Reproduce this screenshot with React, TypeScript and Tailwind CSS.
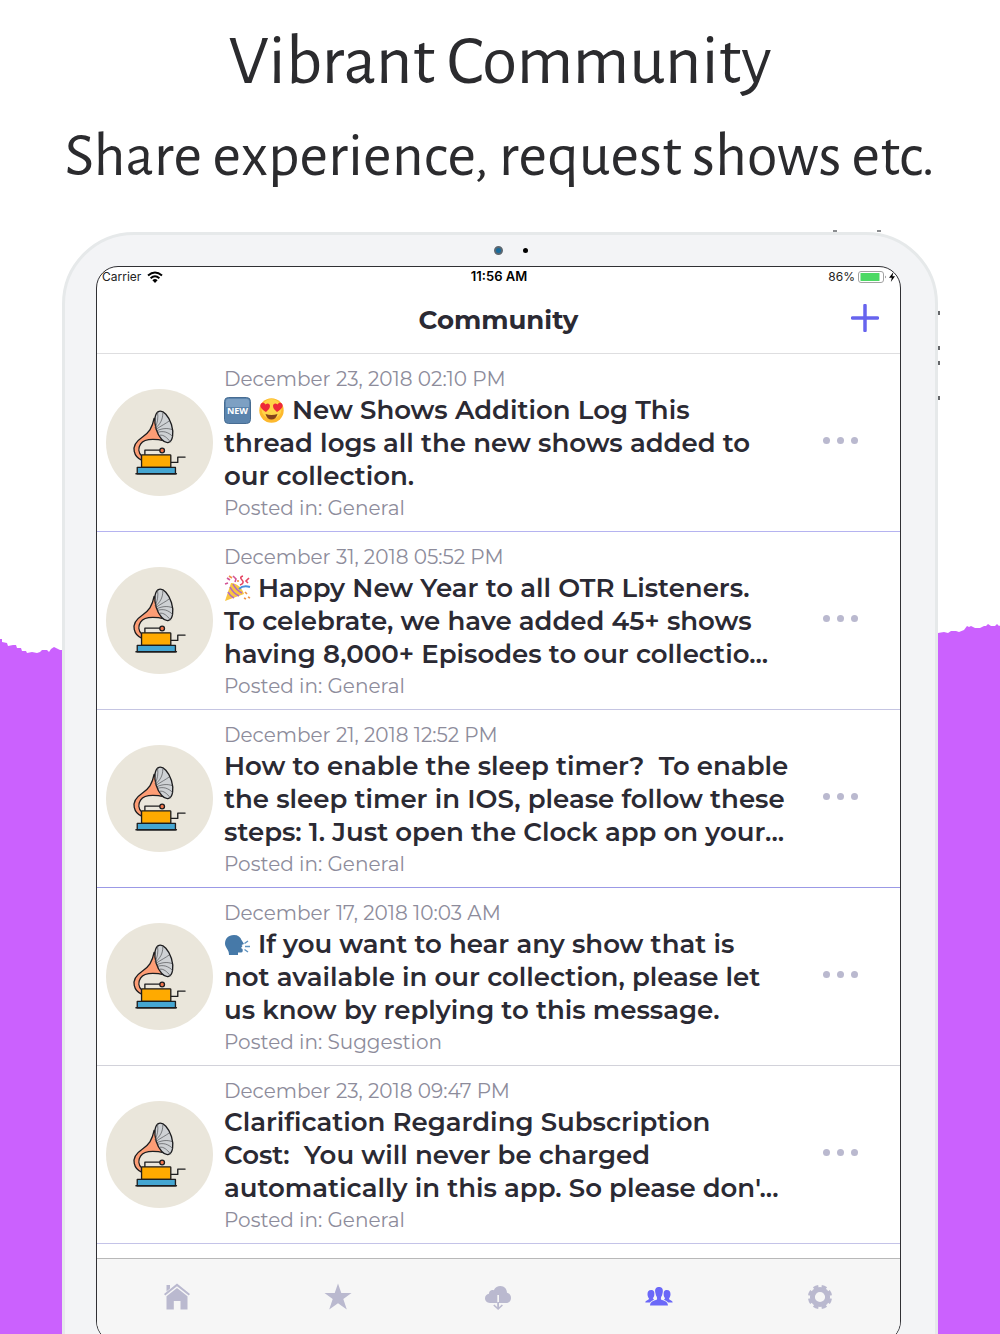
import type { ReactNode } from 'react';

type Emoji = 'new' | 'heartEyes' | 'party' | 'speaking';

interface Post {
  date: string;
  emojis: Emoji[];
  lines: string[];
  category: string;
  divider: string;
}

const posts: Post[] = [
  {
    date: 'December 23, 2018 02:10 PM',
    emojis: ['new', 'heartEyes'],
    lines: ['New Shows Addition Log This', 'thread logs all the new shows added to', 'our collection.'],
    category: 'General',
    divider: 'border-[#b5b3f0]',
  },
  {
    date: 'December 31, 2018 05:52 PM',
    emojis: ['party'],
    lines: [
      'Happy New Year to all OTR Listeners.',
      'To celebrate, we have added 45+ shows',
      'having 8,000+ Episodes to our collectio...',
    ],
    category: 'General',
    divider: 'border-[#c5c5e2]',
  },
  {
    date: 'December 21, 2018 12:52 PM',
    emojis: [],
    lines: [
      'How to enable the sleep timer?\u00a0 To enable',
      'the sleep timer in IOS, please follow these',
      'steps: 1. Just open the Clock app on your...',
    ],
    category: 'General',
    divider: 'border-[#9b99e6]',
  },
  {
    date: 'December 17, 2018 10:03 AM',
    emojis: ['speaking'],
    lines: [
      'If you want to hear any show that is',
      'not available in our collection, please let',
      'us know by replying to this message.',
    ],
    category: 'Suggestion',
    divider: 'border-[#d2d2da]',
  },
  {
    date: 'December 23, 2018 09:47 PM',
    emojis: [],
    lines: [
      'Clarification Regarding Subscription',
      'Cost:\u00a0 You will never be charged',
      "automatically in this app. So please don'...",
    ],
    category: 'General',
    divider: 'border-[#c4c3e8]',
  },
];

const Gramophone = () => (
  <svg viewBox="49 58 322 322" className="size-full" aria-hidden="true">
    <g stroke="#1d1d1f" strokeWidth="4" strokeLinejoin="round" strokeLinecap="round">
      <path
        d="M194 146C188 176 178 190 157 204C139 216 131 232 134 246C137 260 146 268 156 272V259C147 250 145 236 153 224C164 207 192 207 226 214Z"
        fill="#fd9d75"
      />
      <ellipse cx="223" cy="172" rx="24" ry="49" transform="rotate(-17 223 172)" fill="#ced1d4" />
      <g fill="none" strokeWidth="2" stroke="#4b4d50">
        <path d="M197 174C204 160 207 146 204 127" />
        <path d="M198 176C211 164 220 152 220 131" />
        <path d="M200 179C216 168 229 162 238 155" />
        <path d="M203 183C219 176 235 175 247 180" />
        <path d="M206 188C222 183 236 188 249 200" />
        <path d="M211 197C223 195 232 204 243 217" />
      </g>
      <path d="M166 256V242H212" fill="none" />
      <circle cx="218" cy="243" r="7" fill="#f3764c" />
      <path d="M245 279H265V263H287" fill="none" />
      <rect x="156" y="256" width="88" height="38" rx="2" fill="#ffaa00" />
      <path d="M143 294H258V313H143Z" fill="#45a6d2" />
      <path d="M139 313H261" />
    </g>
  </svg>
);

const emojiArt: Record<Emoji, { label: string; art: ReactNode }> = {
  new: {
    label: 'New',
    art: (
      <>
        <rect x="0.5" y="0.5" width="26" height="26" rx="4" fill="#5b84ad" stroke="#476c92" />
        <path d="M2 4Q2 2 4 2H23Q25 2 25 4V10H2Z" fill="#7da0c3" />
        <text
          x="13.5"
          y="17"
          textAnchor="middle"
          fill="#fff"
          className="font-['Open_Sans',sans-serif] text-[9px] font-bold"
        >
          NEW
        </text>
      </>
    ),
  },
  heartEyes: {
    label: 'Smiling face with heart eyes',
    art: (
      <>
        <circle cx="13.5" cy="13.5" r="12.2" fill="#fdb92e" />
        <circle cx="13.5" cy="12" r="10" fill="#ffd548" />
        <path d="M8 15C6 13.500 1.500 11 2.500 7.500C3.500 5 6.500 5.500 7.500 7.500C9.500 5.500 12 6.500 12 9C12 12 9.500 13.500 8 15Z" fill="#ed2939" />
        <path d="M19 15C21 13.500 25.500 11 24.500 7.500C23.500 5 20.500 5.500 19.500 7.500C17.500 5.500 15 6.500 15 9C15 12 17.500 13.500 19 15Z" fill="#ed2939" />
        <path d="M7.500 17Q13.500 19 19.500 17Q18 22.500 13.500 22.500Q9 22.500 7.500 17Z" fill="#84431b" />
      </>
    ),
  },
  party: {
    label: 'Party popper',
    art: (
      <>
        <path d="M7 8L1 26L20 19C18 13 13 8 7 8Z" fill="#f8c640" />
        <path d="M6 12Q9 18 15 21M4 17Q6 21 10 23M9 9Q12 15 18 18" stroke="#b16ac0" strokeWidth="1.600" fill="none" />
        <path d="M3 3l3 2M4 8l-3 1M9 1l3 3-1 3" stroke="#d35496" strokeWidth="1.600" fill="none" />
        <path d="M19 1q-4 1-1 4t-2 5M25 3l-3 3 2 2" stroke="#e64563" strokeWidth="1.600" fill="none" />
        <path d="M15 14q4-4 11-2" stroke="#4a8fdb" strokeWidth="2" fill="none" />
        <path d="M21 17l2 2M24 22l2 1M20 23l2 1M8 3l-3-2M14 5v2" stroke="#ef9345" strokeWidth="1.600" />
      </>
    ),
  },
  speaking: {
    label: 'Speaking head',
    art: (
      <>
        <path
          d="M10 4C4 4 1 8 1 12.500C1 17 5 18 5 24H14V21.500H17C19 21.500 19 19.500 18.500 18L17 17L18.500 15L17.500 14L20 13L17.500 9C16.500 6 14 4 10 4Z"
          fill="#4679a8"
        />
        <path d="M20.500 12.500L24 10M21 15.500H26M20.500 18.500L24 21" stroke="#5f93bf" strokeWidth="1.500" />
      </>
    ),
  },
};

const EmojiIcon = ({ name }: { name: Emoji }) => (
  <svg viewBox="0 0 27 27" className="mr-[7px] inline-block size-[27px] align-[-5px]" role="img" aria-label={emojiArt[name].label}>
    {emojiArt[name].art}
  </svg>
);

const PostRow = ({ post }: { post: Post }) => (
  <li className={`flex items-center border-b pl-[9px] ${post.divider}`}>
    <div className="size-[107px] shrink-0 overflow-hidden rounded-full bg-[#eae6db]">
      <Gramophone />
    </div>
    <div className="min-w-0 flex-1 pt-[11px] pb-2 pl-[11px] whitespace-nowrap">
      <p className="text-[20px] leading-7 text-[#8d8c9b]">{post.date}</p>
      <h2 className="mt-px text-[26px] leading-[33px] font-semibold text-[#2b2a33]">
        {post.lines.map((line, i) => (
          <span key={line} className="block">
            {i === 0 && post.emojis.map((name) => <EmojiIcon key={name} name={name} />)}
            {line}
          </span>
        ))}
      </h2>
      <p className="text-[20px] leading-[30px] text-[#8d8c9b]">Posted in: {post.category}</p>
    </div>
    <button type="button" aria-label="More options" className="mr-[42px] flex gap-[7px] pb-1">
      <span className="size-[7px] rounded-full bg-[#bab9cf]" />
      <span className="size-[7px] rounded-full bg-[#bab9cf]" />
      <span className="size-[7px] rounded-full bg-[#bab9cf]" />
    </button>
  </li>
);

const StatusBar = () => (
  <div className="grid h-5 grid-cols-3 items-center pr-1 pl-[5px] font-['Inter',sans-serif] text-xs text-[#222]">
    <span className="flex items-center gap-[6px]">
      Carrier
      <svg viewBox="0 0 16 12" className="h-3 w-4" fill="none" stroke="#000" strokeWidth="2" aria-hidden="true">
        <path d="M1 4.500Q8-1.500 15 4.500" />
        <path d="M3.600 7.200Q8 3.400 12.400 7.200" />
        <path d="M8 12L5.400 9.200Q8 7 10.600 9.200Z" fill="#000" stroke="none" />
      </svg>
    </span>
    <span className="text-center text-[13px] font-semibold text-black">11:56 AM</span>
    <span className="flex items-center justify-end gap-[3px]">
      86%
      <svg viewBox="0 0 38 14" className="h-[14px] w-[38px]" aria-hidden="true">
        <rect x="0.500" y="1.500" width="25" height="11" rx="2.500" fill="#fff" stroke="#a2a2a2" />
        <rect x="2.500" y="3" width="19" height="8" rx="0.500" fill="#4cd964" />
        <path d="M27 5.500Q28.500 7 27 8.500Z" fill="#555" />
        <path d="M35.500 2L31 7.800H33.800L32.800 12L37 6.200H34.400Z" fill="#000" />
      </svg>
    </span>
  </div>
);

const tabs = [
  {
    label: 'Home',
    color: 'text-[#bab9cf]',
    icon: (
      <>
        <path d="M3.500 2H7V5.500L3.500 8.500Z" />
        <path d="M14 0.500L27 11L25.800 12.500L14 3.300L2.200 12.500L1 11Z" />
        <path d="M14 5L24.500 13.300V26.500H17.500V18H10.800V26.500H3.500V13.300Z" />
      </>
    ),
  },
  {
    label: 'Favorites',
    color: 'text-[#bab9cf]',
    icon: <path d="M14 0.500L17.300 10H27.500L19.300 16L22.800 26.500L14 20.300L5.200 26.500L8.700 16L0.500 10H10.700Z" />,
  },
  {
    label: 'Downloads',
    color: 'text-[#bab9cf]',
    icon: (
      <>
        <path d="M6 20C2.800 20 1 17.800 1 15.300C1 12.800 2.800 11 5 10.700C4.800 8 7.500 6.200 9.800 7.200C11.200 4.300 13.800 3 16.300 3C20.500 3 23 6 23 9.800C25.500 10.300 27 12.400 27 15C27 18 25 20 22 20H15V12H13.300V20Z" />
        <path d="M13.200 19H15V26H13.200Z" />
        <path d="M9.800 22L14.100 26L18.400 22" fill="none" stroke="currentColor" strokeWidth="1.600" />
      </>
    ),
  },
  {
    label: 'Community',
    color: 'text-[#6b68f8]',
    icon: (
      <>
        <path d="M14 4C10.800 4 9.800 6.300 10.200 9L11 12.500C12 14 12.300 15 12 16.500C9.500 18 5.500 17.500 5 22.500H23C22.500 17.500 18.500 18 16 16.500C15.700 15 16 14 17 12.500L17.800 9C18.200 6.300 17.200 4 14 4Z" />
        <path d="M6.200 7C3.500 7 2.300 9 2.500 11.500C2.600 13.500 3.500 15 4 15.500C4 17.500 0.500 17 0.300 19.500H5C6 18 8 17.500 9 16.500L7.800 15.200C9.500 14 9.500 11 9.200 9C8.600 7.500 7.600 7 6.200 7Z" />
        <path d="M21.800 7C24.500 7 25.700 9 25.500 11.500C25.400 13.500 24.500 15 24 15.500C24 17.500 27.500 17 27.700 19.500H23C22 18 20 17.500 19 16.500L20.200 15.200C18.500 14 18.500 11 18.800 9C19.400 7.500 20.400 7 21.800 7Z" />
      </>
    ),
  },
  {
    label: 'Settings',
    color: 'text-[#bab9cf]',
    icon: (
      <g fill="none" stroke="currentColor">
        <circle cx="14" cy="14" r="7.600" strokeWidth="5" />
        <circle
          cx="14"
          cy="14"
          r="10.600"
          strokeWidth="3"
          pathLength="80"
          strokeDasharray="6 4"
          strokeDashoffset="-2"
        />
      </g>
    ),
  },
];

const TabBar = () => (
  <nav className="flex h-[84px] shrink-0 border-t border-[#b8b8b8] bg-[#f6f6f6] pb-2">
    {tabs.map((tab) => (
      <button key={tab.label} type="button" aria-label={tab.label} className={`flex flex-1 items-center justify-center ${tab.color}`}>
        <svg viewBox="0 0 28 28" className="size-7" fill="currentColor" aria-hidden="true">
          {tab.icon}
        </svg>
      </button>
    ))}
  </nav>
);

const Tablet = () => (
  <div className="relative mx-auto mt-[38px] w-[calc(100%-124px)] rounded-[72px] border-3 border-[#e6e9ea] bg-[#f3f4f6] pr-[34px] pb-16 pl-[31px]">
    <span className="absolute -top-[5px] right-[98px] h-[2px] w-1 bg-[#8b8d90]" />
    <span className="absolute -top-[5px] right-[54px] h-[2px] w-1 bg-[#8b8d90]" />
    <span className="absolute top-[76px] -right-[5px] h-1 w-[2px] bg-[#66686b]" />
    <span className="absolute top-[111px] -right-[5px] h-1 w-[2px] bg-[#66686b]" />
    <span className="absolute top-[126px] -right-[5px] h-1 w-[2px] bg-[#66686b]" />
    <span className="absolute top-[161px] -right-[5px] h-1 w-[2px] bg-[#66686b]" />
    <div className="flex h-[31px] items-center justify-center gap-5 pl-6">
      <span className="size-[9px] rounded-full border-2 border-[#5c6770] bg-[#176b9c]" />
      <span className="size-[5px] rounded-full bg-black" />
    </div>
    <div className="overflow-hidden rounded-[22px] border border-[#303034] bg-white">
      <StatusBar />
      <header className="grid h-[67px] grid-cols-[1fr_auto_1fr] items-center border-b border-[#dedee0]">
        <h1 className="col-start-2 text-[26px] font-bold text-[#2b2a33]">Community</h1>
        <button type="button" aria-label="New post" className="mr-[21px] justify-self-end pb-1">
          <svg viewBox="0 0 28 28" className="size-7" stroke="#6764ee" strokeWidth="3.500" strokeLinecap="round" aria-hidden="true">
            <path d="M14 1.500V26.500M1.500 14H26.500" />
          </svg>
        </button>
      </header>
      <ul className="pb-[14px]">
        {posts.map((post) => (
          <PostRow key={post.date} post={post} />
        ))}
      </ul>
      <TabBar />
    </div>
  </div>
);

const PaintBackdrop = () => (
  <div className="col-start-1 row-start-1 flex flex-col pt-[620px]" aria-hidden="true">
    <svg viewBox="0 0 1000 40" preserveAspectRatio="none" className="h-10 w-full shrink-0" fill="#cb61fe">
      <path d="M0 19l2 0 0 3 5 1 1 3 5-1 3 0 1 3 4 0 1 3 4 0 1 2 5-1 5 1 3-1 2-2 5 0 2 2 2-3 3-2 2 1 4 2H938V13l6-1 4 1 3-2 5 0 3 1 5-2 3-4 2 1 2-1 4 2 5 0 4-2 2 0 2-2 3 2 4 0 2-2 2 2 2-1V41H0Z" />
    </svg>
    <div className="flex-1 bg-[#cb61fe]" />
  </div>
);

const App = () => {
  return (
    <main className="grid h-screen grid-cols-1 grid-rows-1 overflow-hidden bg-white font-['Montserrat','Inter',sans-serif]">
      <PaintBackdrop />
      <div className="z-10 col-start-1 row-start-1">
        <div className="pt-[22px] text-center font-['Alegreya_Sans','Lato',sans-serif] whitespace-nowrap text-[#2b2b2e]">
          <p className="text-[71px] leading-20">Vibrant Community</p>
          <p className="pt-4 text-[62px] leading-[76px]">Share experience, request shows etc.</p>
        </div>
        <Tablet />
      </div>
    </main>
  );
};

export default App;
